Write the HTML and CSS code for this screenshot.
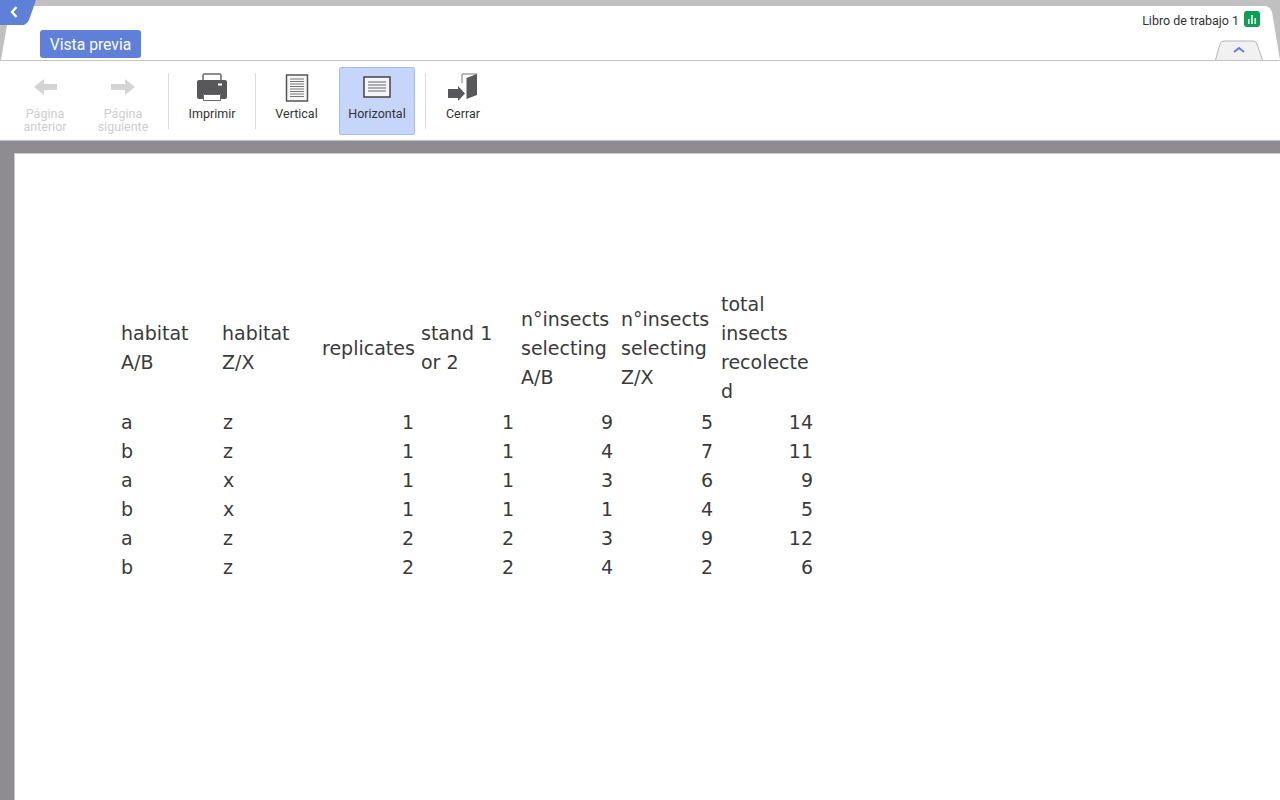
FILE: index.html
```html
<!DOCTYPE html>
<html lang="es">
<head>
<meta charset="utf-8">
<title>Vista previa</title>
<link rel="stylesheet" href="styles.css">
</head>
<body>
<div class="app">
  <header class="titlebar">
    <div class="sheet">
      <div class="doc"><span class="doc-name">Libro de trabajo 1</span>
        <svg class="doc-icon" width="16" height="16" viewBox="0 0 16 16"><rect width="16" height="16" rx="3" fill="#0f9d58"/><path d="M4 8h1.600v5H4zM7.200 4h1.600v9H7.200zM10.400 7h1.600v6h-1.600z" fill="#e8f7ee"/></svg>
      </div>
      <div class="tab-row"><span class="mode-tab">Vista previa</span></div>
    </div>
    <button class="back" aria-label="Volver"><svg width="10" height="14" viewBox="0 0 10 14"><path d="M7.500 2 3 7l4.500 5" fill="none" stroke="#fff" stroke-width="2.400"/></svg></button>
    <button class="collapse" aria-label="Contraer"><svg width="48" height="20" viewBox="0 0 48 20"><path d="M.5 20 5 4Q6 1 9 1h29q3 0 4 3l5.500 16" fill="#f1f1f1" stroke="#b5b5b5"/><path d="m19 12 5-4 5 4" fill="none" stroke="#5f80d9" stroke-width="2"/></svg></button>
  </header>
  <nav class="toolbar">
    <div class="tool disabled prev">
      <svg width="26" height="20" viewBox="0 0 26 20"><path d="M2 10 12 2v5h13v6H12v5z" fill="#d4d4d4"/></svg>
      <span>Página<br>anterior</span>
    </div>
    <div class="tool disabled next">
      <svg width="26" height="20" viewBox="0 0 26 20"><path d="M25 10 15 2v5H1v6h14v5z" fill="#d4d4d4"/></svg>
      <span>Página<br>siguiente</span>
    </div>
    <i class="sep"></i>
    <div class="tool print">
      <svg width="32" height="30" viewBox="0 0 32 30"><path d="M7 8V2.500Q7 1 8.500 1h15Q25 1 25 2.500V8" fill="#fff" stroke="#666" stroke-width="1.500"/><path d="M3 7h26q2 0 2 2v15q0 2-2 2h-4v-5H7v5H3q-2 0-2-2V9q0-2 2-2z" fill="#58585a"/><path d="M7.500 21.500h17v6h-17z" fill="#fff" stroke="#666"/><path d="M22 10.500h4v2h-4z" fill="#fff"/></svg>
      <span>Imprimir</span>
    </div>
    <i class="sep"></i>
    <div class="tool vertical">
      <svg width="24" height="28" viewBox="0 0 24 28"><path d="M1.500 1h21v26h-21z" fill="#f6f6f6" stroke="#555" stroke-width="1.500"/><path d="M5 5h14M5 7.500h14M5 10h14M5 12.500h14M5 15h14M5 17.500h14M5 20h14M5 22.500h14" stroke="#777" stroke-width="1.200"/></svg>
      <span>Vertical</span>
    </div>
    <div class="tool active">
      <svg width="28" height="22" viewBox="0 0 28 22"><path d="M1 1h26v20H1z" fill="#f4f6fb" stroke="#444" stroke-width="1.500"/><path d="M5 6h18M5 9h18M5 12h18M5 15h18" stroke="#666" stroke-width="1.200"/></svg>
      <span>Horizontal</span>
    </div>
    <i class="sep"></i>
    <div class="tool close">
      <svg width="32" height="30" viewBox="0 0 32 30"><path d="M15 10V1h15" fill="none" stroke="#777"/><path d="M19.500 5 30 1v21l-10.500 4z" fill="#58585a"/><path d="M1 16h10v-3l7 7.500-7 7.500v-3H1z" fill="#58585a"/></svg>
      <span>Cerrar</span>
    </div>
  </nav>
  <main class="stage">
    <section class="page">
      <table class="sheet-table">
        <thead>
          <tr><th>habitat<br>A/B</th><th>habitat<br>Z/X</th><th>replicates</th><th>stand 1<br>or 2</th><th>n°insects<br>selecting<br>A/B</th><th>n°insects<br>selecting<br>Z/X</th><th>total<br>insects<br>recolecte<br>d</th></tr>
        </thead>
        <tbody>
          <tr><td>a</td><td>z</td><td>1</td><td>1</td><td>9</td><td>5</td><td>14</td></tr>
          <tr><td>b</td><td>z</td><td>1</td><td>1</td><td>4</td><td>7</td><td>11</td></tr>
          <tr><td>a</td><td>x</td><td>1</td><td>1</td><td>3</td><td>6</td><td>9</td></tr>
          <tr><td>b</td><td>x</td><td>1</td><td>1</td><td>1</td><td>4</td><td>5</td></tr>
          <tr><td>a</td><td>z</td><td>2</td><td>2</td><td>3</td><td>9</td><td>12</td></tr>
          <tr><td>b</td><td>z</td><td>2</td><td>2</td><td>4</td><td>2</td><td>6</td></tr>
        </tbody>
      </table>
    </section>
  </main>
</div>
</body>
</html>
```
FILE: styles.css
```css
* { box-sizing: border-box; }
html, body { margin: 0; height: 100%; overflow: hidden; }
body { font-family: Roboto, "Liberation Sans", sans-serif; background: #fff; }
button { border: 0; padding: 0; background: none; }
.app { display: flex; flex-direction: column; height: 800px; }
.titlebar { position: relative; height: 61px; background: #c0c0c0; border-bottom: 1px solid #c4c4c4; flex: none; }
.sheet {
  height: 60px; background: #fff; padding: 6px 20px 0 40px;
  display: flex; flex-direction: column;
  clip-path: polygon(10px 6px, 1266px 6px, 1270px 8px, 1272px 12px, 1280px 60px, 1px 60px, 7px 25px);
}
.doc { display: flex; align-items: center; justify-content: flex-end; gap: 5px; height: 26px; padding-top: 3px; }
.doc-name { font-size: 12.5px; color: #333; }
.doc-icon { display: block; margin-top: -3px; }
.tab-row { display: flex; height: 28px; margin-top: -2px; }
.mode-tab { background: #5f80d9; color: #fff; font-size: 15.7px; height: 28px; width: 101px; border-radius: 3px; display: flex; align-items: center; justify-content: center; }
.back { position: absolute; left: 0; top: 0; width: 36px; height: 25px; background: #5f80d9; clip-path: polygon(0 0, 100% 0, 29px 20px, 27px 23px, 24px 25px, 0 25px); display: flex; align-items: flex-start; padding: 5px 0 0 9px; }
.back svg { display: block; }
.collapse { position: absolute; left: 1215px; top: 40px; width: 48px; height: 20px; }
.collapse svg { display: block; }
.toolbar { height: 80px; flex: none; background: #fff; display: flex; align-items: flex-start; padding: 6px 0 0 6px; border-bottom: 1px solid #b9bccb; }
.tool { display: flex; flex-direction: column; align-items: center; height: 68px; font-size: 12.5px; line-height: 13px; color: #333; text-align: center; flex: none; }
.tool svg { display: block; height: 30px; margin: 5px 0; }
.tool.disabled { color: #cdcdcd; }
.prev { width: 78px; }
.next { width: 78px; margin-right: 6px; }
.print { width: 86px; }
.vertical { width: 83px; padding-right: 2px; }
.close { width: 76px; padding-right: 2px; }
.print svg, .vertical svg, .close svg { margin: 6px 0 4px; }
.active { width: 76px; background: #c6d6fb; border: 1px solid #a5bdf2; border-radius: 2px; }
.active svg { margin: 4px 0 5px; }
.sep { width: 1px; height: 56px; background: #dcdcdc; margin-top: 6px; flex: none; }
.active + .sep { margin-left: 10px; }
.stage { flex: 1; min-height: 0; background: #8e8c90; padding: 12px 0 0 14px; }
.page { height: 100%; background: #fff; border-left: 1px solid #c9c9c9; border-top: 1px solid #c9c9c9; padding: 136px 0 0 103px; }
.sheet-table { border-collapse: collapse; table-layout: fixed; width: 700px; font-family: "DejaVu Sans", sans-serif; font-size: 19px; color: #3a3a3a; }
.sheet-table th { font-weight: 400; text-align: left; line-height: 29px; padding: 0 3px 2px; width: 100px; vertical-align: middle; }
.sheet-table th:nth-child(2), .sheet-table th:nth-child(3) { padding-left: 4px; }
.sheet-table td { height: 29px; line-height: 29px; padding: 0 3px; }
.sheet-table td:nth-child(2) { padding-left: 5px; }
.sheet-table td:nth-child(n+3) { text-align: right; padding-right: 4px; }
.sheet-table td:nth-child(n+5) { padding-right: 5px; }
```
